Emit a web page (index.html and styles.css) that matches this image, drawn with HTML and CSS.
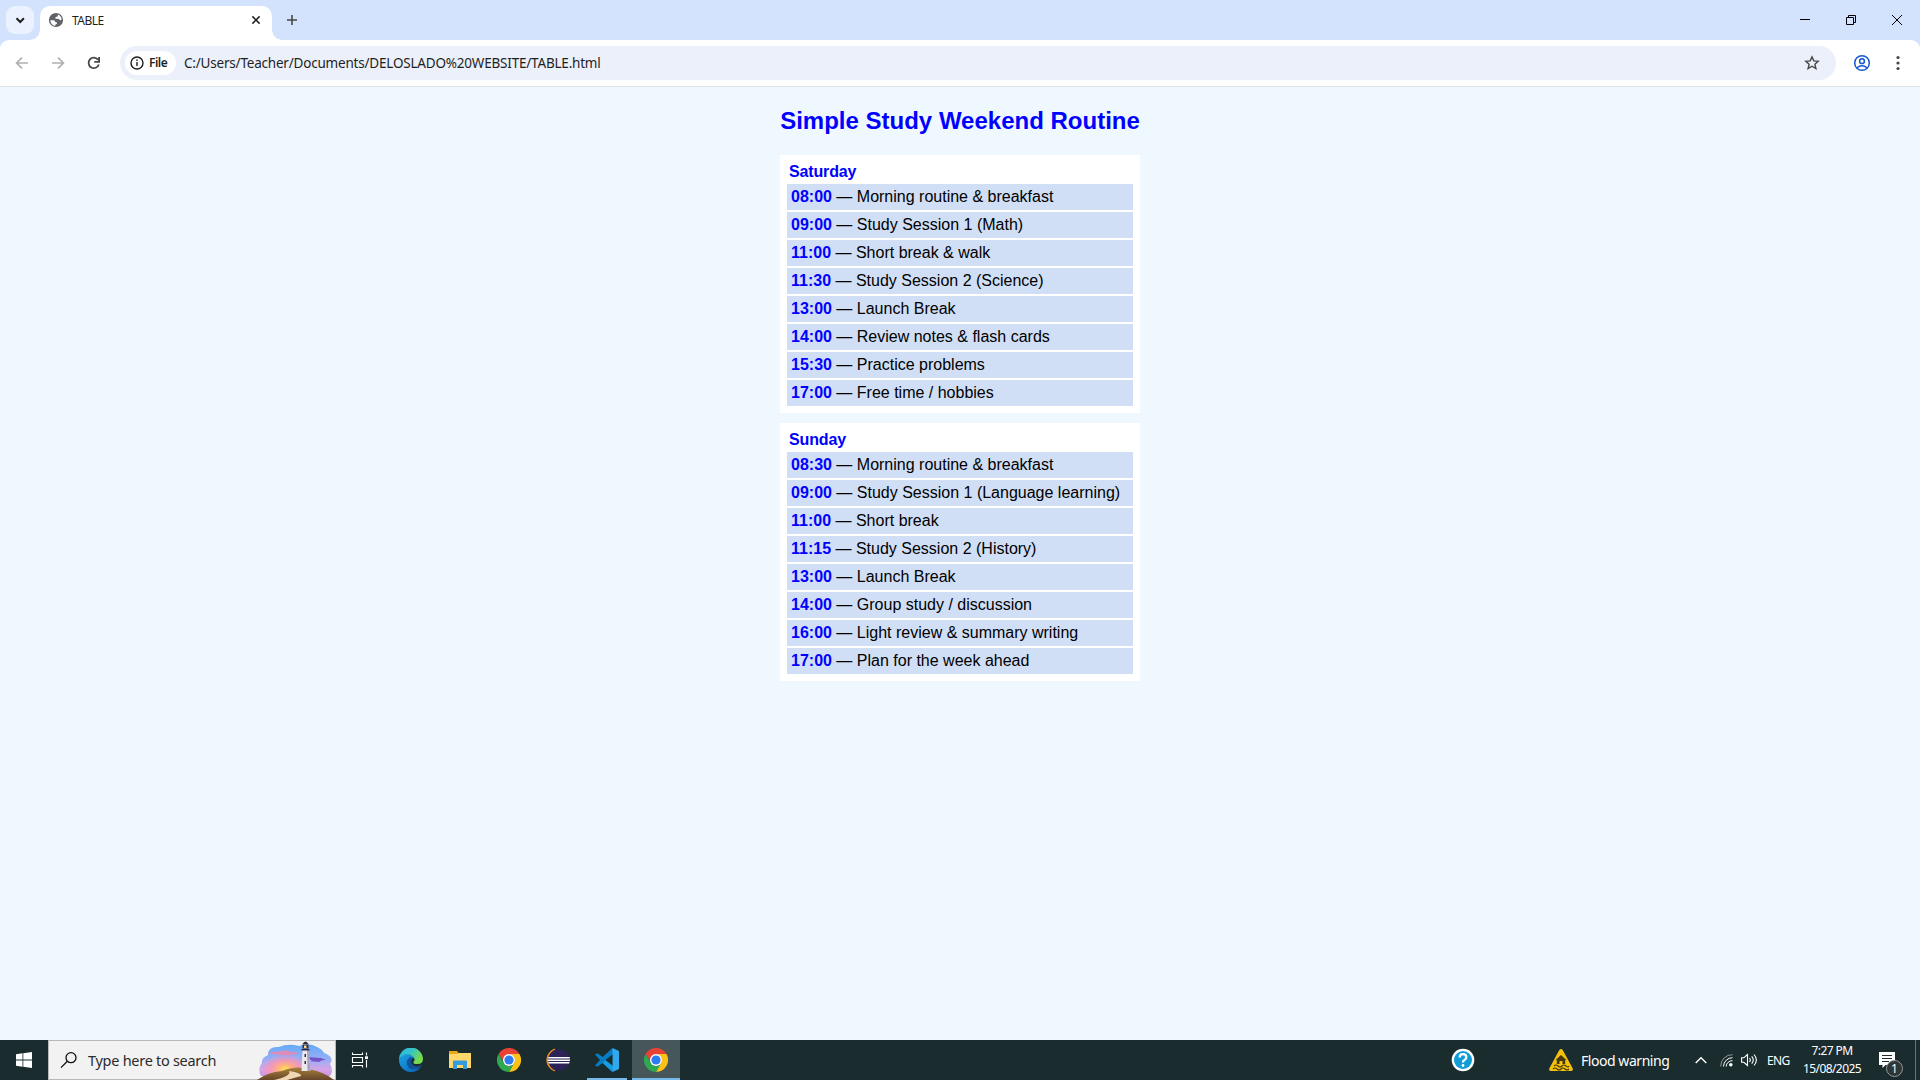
FILE: index.html
```html
<!DOCTYPE html>
<html lang="en">
<head>
<meta charset="utf-8">
<title>TABLE</title>
<link rel="stylesheet" href="styles.css">
</head>
<body>
<svg class="defs" width="0" height="0" aria-hidden="true">
  <defs>
    <symbol id="chrome" viewBox="0 0 24 24">
      <path fill="#e94235" d="M1.6 6A12 12 0 0 1 22.4 6L22.4 6.5H12L7.2 14.8z"/>
      <path fill="#fbc116" d="M22.4 6A12 12 0 0 1 12 24L17 14.8A6 6 0 0 0 12 6z"/>
      <path fill="#2da94f" d="M12 24A12 12 0 0 1 1.6 6L6.8 15A6 6 0 0 0 17.2 15z"/>
      <circle cx="12" cy="12" r="6" fill="#fff"/><circle cx="12" cy="12" r="4.6" fill="#2d7bf0"/>
    </symbol>
  </defs>
</svg>
<header class="tabstrip">
  <div class="tab-search"><svg width="28" height="28" viewBox="0 0 28 28"><path d="M10.5 12.3l3.7 3.7 3.7-3.7" fill="none" stroke="#1f1f1f" stroke-width="2"/></svg></div>
  <div class="tab">
    <svg class="globe" width="16" height="16" viewBox="0 0 16 16"><circle cx="8" cy="8" r="7.1" fill="#5f6368"/><path d="M2.300 8.300H5.500Q7.300 8.500 7.200 10.100L8.900 10.400V12L7.300 12.600V13.900A6 6 0 0 1 2.300 8.300zM9.800 2.500A6 6 0 0 1 13.700 7.600Q12.300 8.900 11.300 7.600L10.300 6.800H7.500Q6.500 5.600 8.200 4.900L9.800 4.300z" fill="#fff"/></svg>
    <span class="tab-title">TABLE</span>
    <svg class="tab-close" width="10" height="10" viewBox="0 0 10 10"><path d="M1.4 1.4l7.2 7.2M8.6 1.4L1.4 8.6" stroke="#1f1f1f" stroke-width="1.5"/></svg>
  </div>
  <svg class="new-tab" width="12" height="12" viewBox="0 0 12 12"><path d="M6 1v10M1 6h10" stroke="#474747" stroke-width="1.6"/></svg>
  <div class="window-buttons">
    <svg width="46" height="40" viewBox="0 0 46 40"><path d="M18 19.5h10" stroke="#000"/></svg>
    <svg width="46" height="40" viewBox="0 0 46 40"><path d="M18.5 17.5h7v7h-7zM20.5 17.5v-2h7v7h-2" fill="none" stroke="#000"/></svg>
    <svg width="46" height="40" viewBox="0 0 46 40"><path d="M18 15l10 10M28 15L18 25" stroke="#000"/></svg>
  </div>
</header>
<nav class="toolbar">
  <svg width="36" height="36" viewBox="0 0 36 36"><path d="M24 18H13M18 12.6L12.6 18l5.4 5.4" fill="none" stroke="#b0b0b0" stroke-width="1.7"/></svg>
  <svg width="36" height="36" viewBox="0 0 36 36"><path d="M12 18h11M18 12.6l5.4 5.4-5.4 5.4" fill="none" stroke="#b0b0b0" stroke-width="1.7"/></svg>
  <svg width="36" height="36" viewBox="0 0 36 36"><path d="M22.8 19.4A5.2 5.2 0 1 1 22 14.8M23.1 12v4.8h-4.800" fill="none" stroke="#474747" stroke-width="1.8"/></svg>
  <div class="omnibox">
    <div class="chip">
      <svg width="14" height="14" viewBox="0 0 14 14"><circle cx="7" cy="7" r="6" fill="none" stroke="#1f1f1f" stroke-width="1.4"/><path d="M7 6.1v4M7 3.6v1.500" stroke="#1f1f1f" stroke-width="1.4"/></svg>
      <span>File</span>
    </div>
    <span class="url">C:/Users/Teacher/Documents/DELOSLADO%20WEBSITE/TABLE.html</span>
    <svg class="star" width="16" height="16" viewBox="0 0 16 16"><path d="M8 1.9l1.8 4 4.4.4-3.3 2.9 1 4.3L8 11.2l-3.9 2.3 1-4.3L1.8 6.3l4.400-.4z" fill="none" stroke="#474747" stroke-width="1.4"/></svg>
  </div>
  <svg class="profile" width="18" height="18" viewBox="0 0 18 18"><g fill="none" stroke="#1558d0" stroke-width="1.5"><circle cx="9" cy="9" r="7.3"/><circle cx="9" cy="7.2" r="2.4"/><path d="M3.8 14Q9 9.600 14.200 14"/></g></svg>
  <svg class="menu" width="4" height="16" viewBox="0 0 4 16"><g fill="#474747"><circle cx="2" cy="2.5" r="1.6"/><circle cx="2" cy="8" r="1.6"/><circle cx="2" cy="13.5" r="1.6"/></g></svg>
</nav>
<main class="page">
  <h2>Simple Study Weekend Routine</h2>
  <table class="routine">
    <tr><th>Saturday</th></tr>
    <tr><td><b>08:00</b> — Morning routine &amp; breakfast</td></tr>
    <tr><td><b>09:00</b> — Study Session 1 (Math)</td></tr>
    <tr><td><b>11:00</b> — Short break &amp; walk</td></tr>
    <tr><td><b>11:30</b> — Study Session 2 (Science)</td></tr>
    <tr><td><b>13:00</b> — Launch Break</td></tr>
    <tr><td><b>14:00</b> — Review notes &amp; flash cards</td></tr>
    <tr><td><b>15:30</b> — Practice problems</td></tr>
    <tr><td><b>17:00</b> — Free time / hobbies</td></tr>
  </table>
  <table class="routine">
    <tr><th>Sunday</th></tr>
    <tr><td><b>08:30</b> — Morning routine &amp; breakfast</td></tr>
    <tr><td><b>09:00</b> — Study Session 1 (Language learning)</td></tr>
    <tr><td><b>11:00</b> — Short break</td></tr>
    <tr><td><b>11:15</b> — Study Session 2 (History)</td></tr>
    <tr><td><b>13:00</b> — Launch Break</td></tr>
    <tr><td><b>14:00</b> — Group study / discussion</td></tr>
    <tr><td><b>16:00</b> — Light review &amp; summary writing</td></tr>
    <tr><td><b>17:00</b> — Plan for the week ahead</td></tr>
  </table>
</main>
<footer class="taskbar">
  <div class="start"><svg width="16" height="16" viewBox="0 0 16 16"><path d="M0 2.2L6.5 1.3v6.2H0zM7.3 1.2L16 0v7.5H7.3zM0 8.4h6.5v6.3L0 13.8zM7.3 8.4H16V16l-8.7-1.2z" fill="#fff"/></svg></div>
  <div class="search">
    <svg class="lens" width="18" height="18" viewBox="0 0 18 18"><g fill="none" stroke="#111" stroke-width="1.3"><circle cx="11" cy="6.7" r="5"/><path d="M7.3 10.3L1 16.6"/></g></svg>
    <span class="search-text">Type here to search</span>
    <svg class="lighthouse" width="78" height="39" viewBox="0 0 78 39">
      <defs>
        <linearGradient id="sky" x1="0" y1="0" x2="0" y2="1"><stop offset="0" stop-color="#62aaf6"/><stop offset=".45" stop-color="#94aff8"/><stop offset=".8" stop-color="#d7a4e4"/><stop offset="1" stop-color="#c994e6"/></linearGradient>
        <linearGradient id="hill" x1="0" y1="0" x2="0" y2="1"><stop offset="0" stop-color="#a9813b"/><stop offset="1" stop-color="#654529"/></linearGradient>
        <radialGradient id="sun"><stop offset="0" stop-color="#ffe055"/><stop offset=".3" stop-color="#ffb080"/><stop offset=".6" stop-color="#ff94ac" stop-opacity=".8"/><stop offset="1" stop-color="#ff91b0" stop-opacity="0"/></radialGradient>
      </defs>
      <path fill="url(#sky)" d="M4 35Q0 28 5 22Q4 17 11 14Q11 5 22 6Q31 2 42 5Q52 1 60 6Q65 8 67 12Q78 16 73 23Q77 30 73 35z"/>
      <ellipse cx="28" cy="28" rx="24" ry="15" fill="url(#sun)"/>
      <path d="M11 12q6-2 11-1 6-3 12 0l9 1-8 2q-12 1-24-2z" fill="#e28ab9"/>
      <path d="M50 16l14 1 5 2-14 1zM52 20l14-1-4 2z" fill="#7653c7"/>
      <path fill="url(#hill)" d="M0 39Q11 31 25 30Q39 24 51 28Q68 31 77 39z"/>
      <path d="M32 30q13 2 12 5l-14 4H17q18-4 15-9z" fill="#efd7b3"/>
      <path d="M45.500 9h6l2 21h-9z" fill="#ebe9ed"/><path d="M50 9h1.500l2 21h-3z" fill="#a5a0bb"/>
      <path d="M44.500 8h8v1.500h-8zM45.500 3.500h6v4h-6zM45.500 3q3-5 6 0zM47.500 13h1.500v3h-1.500zM47.500 20h1.500v3h-1.500z" fill="#2e2b42"/><path d="M47 4.500h2.500v2.500H47z" fill="#ffd98b"/>
    </svg>
  </div>
  <div class="apps">
    <div class="app"><svg width="18" height="18" viewBox="0 0 18 18"><path d="M1.5 1.500v2h10v-2M1.5 16.500v-2h10v2M1.5 6.5h10v5h-10zM15.500 1.500v3M15.500 9v7.500" fill="none" stroke="#fff" stroke-width="1.1"/><path d="M14 5.300h3v2.800h-3z" fill="#fff"/></svg></div>
    <div class="app"><svg width="24" height="24" viewBox="0 0 24 24">
      <defs><linearGradient id="eg" x1="0" y1="0" x2="1" y2=".5"><stop offset="0" stop-color="#24b6ed"/><stop offset=".5" stop-color="#36c5c6"/><stop offset="1" stop-color="#78dc46"/></linearGradient><linearGradient id="eb" x1="0" y1="0" x2="1" y2="1"><stop offset="0" stop-color="#1ba3e8"/><stop offset="1" stop-color="#0961b4"/></linearGradient></defs>
      <path fill="url(#eb)" d="M0 12Q2 6 8 6Q13 6 15 10Q9 10 9 15Q10 21 16 21Q20 21 22.5 18Q19 24 12 24A12 12 0 0 1 0 12z"/>
      <path fill="#12529b" d="M11 9Q5 14 10 20Q15 24 22.5 18Q22.8 17 22 17.3Q16 20 13 16Q11 13 14 10z"/>
      <path fill="url(#eg)" d="M0 12A12 12 0 0 1 24 11Q24 16 18.5 16Q14 16 14.2 14Q17 12 14 8.500Q10 5 5 7Q1 8.500 0 12z"/>
    </svg></div>
    <div class="app"><svg width="22" height="18" viewBox="0 0 22 18"><path d="M0 0h8l1.500 2H22v15H0z" fill="#e8a918"/><path d="M0 3h8l2-1h12v15H0z" fill="#ffd76b"/><path d="M4 10.500q0-1 1-1h12q1 0 1 1V18h-4v-4H8v4H4z" fill="#349cde"/></svg></div>
    <div class="app"><svg width="24" height="24"><use href="#chrome"/></svg></div>
    <div class="app"><svg width="24" height="24" viewBox="0 0 24 24"><path d="M9 1A11.5 11.5 0 0 0 9 23A15 15 0 0 1 9 1z" fill="#f79422" stroke="#f79422"/><circle cx="13" cy="12" r="10.9" fill="#2c2255"/><path d="M2.200 9h21.600v1.500H2.200zM2 11.500h22V13H2zM2.200 14h21.400l-.4 1.500H2.600z" fill="#fff"/></svg></div>
    <div class="app running"><svg width="24" height="24" viewBox="0 0 24 24"><path d="M17.500 0L7.600 9.100 2.600 5.300 0 6.500 5 12l-5 5.500 2.600 1.200 5-3.800 9.900 9.100 1.500-4V4z" fill="#087cc5"/><path d="M17.500 24L7.600 14.900 10.500 12l7 5.500z" fill="#169ce0"/><path d="M17.500 0L24 3v18l-6.500 3z" fill="#32a8ed"/><path d="M17.500 6.500v11L10.500 12z" fill="#1b2c2f"/></svg></div>
    <div class="app running active"><svg width="24" height="24"><use href="#chrome"/></svg></div>
  </div>
  <div class="help"><svg width="24" height="24" viewBox="0 0 24 24"><circle cx="12" cy="12" r="11.300" fill="#fff"/><circle cx="12" cy="12" r="9" fill="#119bd7"/><path d="M8.700 9.500Q8.700 6.200 12 6.200t3.300 3Q15.300 11 13.500 12T12 14.500" fill="none" stroke="#fff" stroke-width="2.300"/><circle cx="12" cy="17.500" r="1.400" fill="#fff"/></svg></div>
  <div class="weather"><svg width="24" height="22" viewBox="0 0 24 22"><path d="M10.300 1Q12 -1 13.700 1L23.500 19Q24.500 22 22 22H2Q-.5 22 .5 19z" fill="#f4c20d"/><path d="M12 6l5.500 5h-1.300v4H13.500v-3h-3v3H7.800v-4H6.500z" fill="#45380e"/><path d="M5 17q2-2 4 0t4 0 4 0 3 0M4 20q2-2 4 0t4 0 4 0 4 0" fill="none" stroke="#45380e" stroke-width="1.100"/></svg><span>Flood warning</span></div>
  <div class="tray">
    <svg class="chevron" width="12" height="8" viewBox="0 0 12 8"><path d="M.7 7L6 1.700 11.300 7" fill="none" stroke="#fff" stroke-width="1.400"/></svg>
    <svg class="wifi" width="13" height="13" viewBox="0 0 13 13"><g fill="none" stroke="#fff"><path opacity=".5" d="M.7 12.500A11.500 11.500 0 0 1 12.500.7"/><path d="M3.500 12.500A9 9 0 0 1 12.500 3.700M6.200 12.500A6 6 0 0 1 12.500 6.700"/></g><circle cx="10.800" cy="10.800" r="1.800" fill="#fff"/></svg>
    <svg class="sound" width="17" height="14" viewBox="0 0 17 14"><path d="M.6 4.800h2.200L6.500 1.500v11L2.800 9.300H.6zM8.500 5q1.700 2 0 4M10.700 3.300q3.200 3.700 0 7.400M13 1.500q4.800 5.500 0 11" fill="none" stroke="#fff" stroke-width="1.100"/></svg>
    <span class="lang">ENG</span>
    <div class="clock"><span>7:27 PM</span><span>15/08/2025</span></div>
    <div class="notice"><svg width="16" height="16" viewBox="0 0 16 16"><path d="M0 0h16v13H6.500L3.500 16v-3H0z" fill="#fff"/><path d="M3 3.500h10M3 6.500h10M3 9.500h7" stroke="#1b2c2e"/></svg><span class="badge">1</span></div>
  </div>
</footer>
</body>
</html>
```
FILE: styles.css
```css
* { box-sizing: border-box; }
body { margin: 0; height: 1080px; overflow: hidden; display: flex; flex-direction: column; background: #d3e3fd; font-family: "Noto Sans", "Open Sans", sans-serif; color: #1f1f1f; }
svg { display: block; flex: none; }
span { white-space: nowrap; }
.defs { position: absolute; }

.tabstrip { height: 40px; flex: none; display: flex; align-items: center; padding-left: 6px; background: #d3e3fd; }
.tab-search { width: 28px; height: 28px; border-radius: 9px; background: #ebf1fe; }
.tab { position: relative; width: 232px; height: 34px; margin: 6px 0 0 6px; padding: 0 11px 6px 8px; display: flex; align-items: center; border-radius: 10px 10px 0 0; background: #fff; }
.tab::before, .tab::after { content: ""; position: absolute; bottom: 0; width: 10px; height: 10px; }
.tab::before { left: -10px; background: radial-gradient(circle at 0 0, transparent 9.5px, #fff 10px); }
.tab::after { right: -10px; background: radial-gradient(circle at 100% 0, transparent 9.5px, #fff 10px); }
.tab-title { margin-left: 8px; font-size: 12px; letter-spacing: -0.55px; }
.tab-close { margin-left: auto; }
.new-tab { margin-left: 14px; }
.window-buttons { margin-left: auto; display: flex; }

.toolbar { height: 47px; flex: none; display: flex; align-items: center; padding: 0 20px 1px 4px; background: #fff; border-bottom: 1px solid #dfe3e7; border-radius: 9px 9px 0 0; }
.omnibox { width: 1716px; height: 34px; margin-left: 8px; padding: 0 16px 0 5px; display: flex; align-items: center; border-radius: 17px; background: #ebf0fa; }
.chip { width: 51px; height: 24px; padding-left: 5px; display: flex; align-items: center; gap: 5px; border-radius: 12px; background: #fff; font-size: 12px; font-weight: 600; letter-spacing: -0.5px; }
.url { margin-left: 8px; font-size: 13.5px; letter-spacing: -0.2px; }
.star { margin-left: auto; }
.profile { margin-left: 17px; }
.menu { margin-left: auto; }

.page { flex: 1; display: flex; flex-direction: column; align-items: center; gap: 10px; background: #f0f8ff; font-family: "Liberation Sans", Arial, sans-serif; color: #000; }
.page h2 { margin: 20px 0 11px; height: 27px; font-size: 24px; line-height: 27px; color: #00f; white-space: nowrap; }
.routine { width: 360px; padding: 5px; border-spacing: 2px; background: #fff; font-size: 16px; line-height: 18px; white-space: nowrap; }
.routine th { padding: 1px 2px; text-align: left; color: #00f; letter-spacing: -0.15px; }
.routine td { padding: 4px; background: #d0def6; }
.routine b { color: #00f; }

.taskbar { height: 40px; flex: none; display: flex; background: #1b2c2f; color: #fff; }
.start { width: 48px; display: grid; place-items: center; }
.search { width: 288px; display: flex; align-items: center; padding-left: 11px; background: #f2f2f2; border: 1px solid #b8b8b8; color: #2b2b2b; }
.search-text { margin-left: 10px; font-size: 14.5px; letter-spacing: -0.28px; }
.lighthouse { margin-left: auto; }
.apps { display: flex; }
.app { width: 49px; display: grid; place-items: center; }
.app:first-child { width: 48px; margin-right: 2px; }
.running { width: 40px; margin: 0 5px; box-shadow: inset 0 -2px #76b9ed; }
.active { width: 48px; margin: 0; background: #475658; }
.help { margin-left: auto; display: flex; align-items: center; }
.weather { margin-left: 74px; width: 142px; display: flex; align-items: center; gap: 8px; font-size: 14px; letter-spacing: -0.45px; }
.tray { display: flex; align-items: center; width: 225px; border-right: 1px solid #66777a; margin-right: 4px; }
.chevron { margin-left: 4px; }
.wifi { margin-left: 13px; }
.sound { margin-left: 8px; }
.lang { width: 24px; margin-left: 9px; font-size: 12px; letter-spacing: -0.6px; }
.clock { width: 60px; margin-left: 11px; display: flex; flex-direction: column; align-items: center; font-size: 12px; line-height: 18px; letter-spacing: -0.6px; }
.notice { position: relative; margin-left: 17px; }
.badge { position: absolute; left: 7px; top: 8px; width: 17px; height: 17px; border: 1px solid #929a9b; border-radius: 50%; background: #303536; font-size: 12px; line-height: 15px; text-align: center; }
```
